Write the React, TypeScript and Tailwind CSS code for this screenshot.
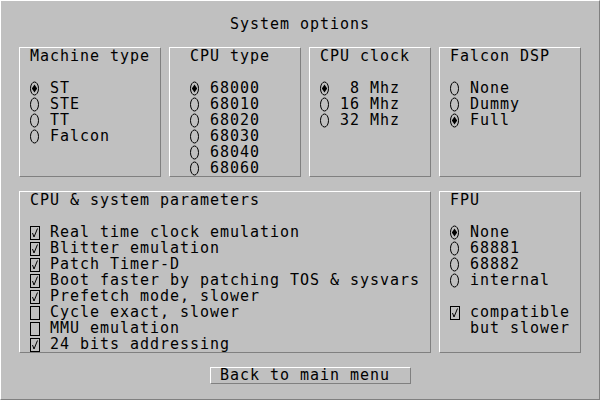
import React from 'react';

const font = { fontFamily: '"DejaVu Sans Mono", "Liberation Mono", monospace' };

function Radio({ on }: { on: boolean }) {
  return (
    <svg width="10" height="16" viewBox="0 0 10 16" className="shrink-0">
      <ellipse cx="4.5" cy="8.5" rx="4" ry="6.5" fill="none" stroke="#000" strokeWidth="1" />
      {on && <polygon points="4.5,4.5 7.2,8.5 4.5,12.5 1.8,8.5" fill="#000" />}
    </svg>
  );
}

function Check({ on }: { on: boolean }) {
  return (
    <svg width="10" height="16" viewBox="0 0 10 16" className="shrink-0" shapeRendering="crispEdges">
      <rect x="0.5" y="2.5" width="9" height="13" fill="none" stroke="#000" strokeWidth="1" />
      {on && (
        <path d="M2.5 9 L4 13 L7.5 4.5" fill="none" stroke="#000" strokeWidth="1" shapeRendering="geometricPrecision" />
      )}
    </svg>
  );
}

function Row({ children }: { children: React.ReactNode }) {
  return <div className="h-[16px] leading-[16px] whitespace-pre flex items-start">{children}</div>;
}

function Option({ kind, on, label }: { kind: 'radio' | 'check'; on: boolean; label: string }) {
  return (
    <Row>
      <span className="w-[20px] shrink-0 flex">
        {kind === 'radio' ? <Radio on={on} /> : <Check on={on} />}
      </span>
      <span>{label}</span>
    </Row>
  );
}

function Box({ title, width, pad, children }: { title: string; width: string; pad: string; children: React.ReactNode }) {
  return (
    <div
      className={`${width} ${pad} h-full box-border border border-t-white border-l-white border-r-[#808080] border-b-[#808080] flex flex-col`}
    >
      <Row>{title}</Row>
      <div className="h-[16px]" />
      {children}
    </div>
  );
}

export default function App() {
  return (
    <div
      className="w-[600px] h-[400px] box-border bg-[#c0c0c0] border border-t-white border-l-white border-r-[#808080] border-b-[#808080] flex flex-col text-black text-[15px] tracking-[0.97px]"
      style={font}
    >
      <div className="mt-[15px] h-[16px] leading-[16px] text-center">System options</div>

      <div className="mt-[15px] h-[130px] flex gap-[8px] pl-[18px]">
        <Box title="Machine type" width="w-[142px]" pad="pl-[10px]">
          <Option kind="radio" on label="ST" />
          <Option kind="radio" on={false} label="STE" />
          <Option kind="radio" on={false} label="TT" />
          <Option kind="radio" on={false} label="Falcon" />
        </Box>
        <Box title="CPU type" width="w-[132px]" pad="pl-[20px]">
          <Option kind="radio" on label="68000" />
          <Option kind="radio" on={false} label="68010" />
          <Option kind="radio" on={false} label="68020" />
          <Option kind="radio" on={false} label="68030" />
          <Option kind="radio" on={false} label="68040" />
          <Option kind="radio" on={false} label="68060" />
        </Box>
        <Box title="CPU clock" width="w-[122px]" pad="pl-[10px]">
          <Option kind="radio" on label=" 8 Mhz" />
          <Option kind="radio" on={false} label="16 Mhz" />
          <Option kind="radio" on={false} label="32 Mhz" />
        </Box>
        <Box title="Falcon DSP" width="w-[142px]" pad="pl-[10px]">
          <Option kind="radio" on={false} label="None" />
          <Option kind="radio" on={false} label="Dummy" />
          <Option kind="radio" on label="Full" />
        </Box>
      </div>

      <div className="mt-[14px] h-[162px] flex gap-[8px] pl-[18px]">
        <Box title="CPU & system parameters" width="w-[412px]" pad="pl-[10px]">
          <Option kind="check" on label="Real time clock emulation" />
          <Option kind="check" on label="Blitter emulation" />
          <Option kind="check" on label="Patch Timer-D" />
          <Option kind="check" on label="Boot faster by patching TOS & sysvars" />
          <Option kind="check" on label="Prefetch mode, slower" />
          <Option kind="check" on={false} label="Cycle exact, slower" />
          <Option kind="check" on={false} label="MMU emulation" />
          <Option kind="check" on label="24 bits addressing" />
        </Box>
        <Box title="FPU" width="w-[142px]" pad="pl-[10px]">
          <Option kind="radio" on label="None" />
          <Option kind="radio" on={false} label="68881" />
          <Option kind="radio" on={false} label="68882" />
          <Option kind="radio" on={false} label="internal" />
          <div className="h-[16px]" />
          <Option kind="check" on label="compatible" />
          <Row>
            <span className="w-[20px] shrink-0" />
            <span>but slower</span>
          </Row>
        </Box>
      </div>

      <div className="mt-[14px] pl-[209px] flex">
        <button className="w-[201px] h-[17px] box-border border border-t-white border-l-white border-r-[#808080] border-b-[#808080] pl-[9px] text-left leading-[15px] whitespace-pre">
          Back to main menu
        </button>
      </div>
    </div>
  );
}
